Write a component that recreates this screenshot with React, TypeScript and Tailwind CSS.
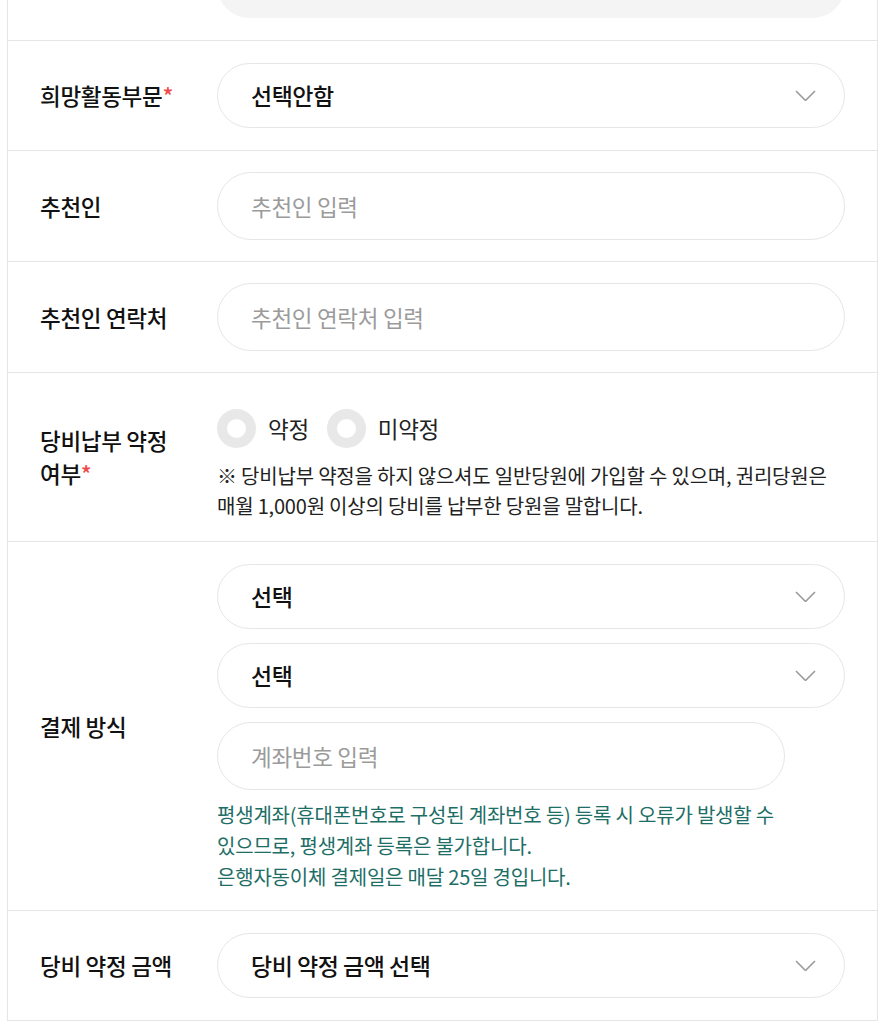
import React from 'react';

const font = { fontFamily: '"Noto Sans CJK KR", "Noto Sans", sans-serif' };

const Chevron: React.FC = () => (
  <svg width="21" height="11" viewBox="0 0 21 11" fill="none" className="shrink-0">
    <path d="M1 1l9.5 9.5L20 1" stroke="#9a9a9a" strokeWidth="1.6" />
  </svg>
);

const Select: React.FC<{ value: string }> = ({ value }) => (
  <div className="flex items-center justify-between h-[65px] rounded-full border border-[#e6e6e6] bg-white pl-[33px] pr-[28px]">
    <span className="text-[23px] font-medium text-[#111] leading-none tracking-[-0.5px]">{value}</span>
    <Chevron />
  </div>
);

const Input: React.FC<{ placeholder: string; className?: string }> = ({ placeholder, className = '' }) => (
  <div className={`flex items-center h-[68px] rounded-full border border-[#e6e6e6] bg-white pl-[33px] ${className}`}>
    <span className="text-[22.5px] text-[#9b9b9b] leading-none tracking-[-0.3px]">{placeholder}</span>
  </div>
);

const Row: React.FC<{ label: React.ReactNode; children: React.ReactNode; className?: string }> = ({ label, children, className = 'py-[22px]' }) => (
  <div className="flex border-b border-[#e6e6e6]">
    <div className="w-[209px] shrink-0 flex items-center pl-[32px]">
      <div className="text-[22.5px] font-medium text-[#111] leading-[33px] tracking-[-0.3px]">{label}</div>
    </div>
    <div className={`flex-1 pr-[32px] ${className}`}>{children}</div>
  </div>
);

const Req = () => <span className="text-[#f04b4b]">*</span>;

const Radio: React.FC<{ label: string }> = ({ label }) => (
  <label className="flex items-center gap-[12px]">
    <span className="w-[39px] h-[39px] rounded-full border-[10px] border-[#e8e8e8] bg-white" />
    <span className="text-[22.5px] text-[#222] leading-none tracking-[-0.3px]">{label}</span>
  </label>
);

export default function App() {
  return (
    <div className="min-h-screen bg-white" style={font}>
      <div className="ml-[7px] mr-[3px] border-x border-[#e6e6e6]">
        {/* tail of previous row */}
        <div className="flex border-b border-[#e6e6e6] h-[41px] overflow-hidden">
          <div className="w-[209px] shrink-0" />
          <div className="flex-1 pr-[32px] flex flex-col justify-end pb-[22px]">
            <div className="h-[65px] shrink-0 rounded-full bg-[#f4f4f4]" />
          </div>
        </div>

        <Row label={<>희망활동부문<Req /></>}>
          <Select value="선택안함" />
        </Row>

        <Row label="추천인" className="py-[21px]">
          <Input placeholder="추천인 입력" />
        </Row>

        <Row label="추천인 연락처" className="py-[21px]">
          <Input placeholder="추천인 연락처 입력" />
        </Row>

        <Row label={<>당비납부 약정<br />여부<Req /></>} className="pt-[36px] pb-[20px]">
          <div className="flex items-center gap-[18px]">
            <Radio label="약정" />
            <Radio label="미약정" />
          </div>
          <p className="mt-[13px] text-[20px] leading-[30px] text-[#222] tracking-[-0.2px] break-keep">
            ※ 당비납부 약정을 하지 않으셔도 일반당원에 가입할 수 있으며, 권리당원은 매월 1,000원 이상의 당비를 납부한 당원을 말합니다.
          </p>
        </Row>

        <Row label="결제 방식" className="pt-[22px] pb-[18px]">
          <div className="flex flex-col gap-[14px]">
            <Select value="선택" />
            <Select value="선택" />
            <Input placeholder="계좌번호 입력" className="mr-[60px]" />
          </div>
          <p className="mt-[9px] text-[20px] leading-[31px] text-[#1d6e66] tracking-[-0.2px] pr-[50px] break-keep">
            평생계좌(휴대폰번호로 구성된 계좌번호 등) 등록 시 오류가 발생할 수 있으므로, 평생계좌 등록은 불가합니다.
            <br />
            은행자동이체 결제일은 매달 25일 경입니다.
          </p>
        </Row>

        <Row label="당비 약정 금액">
          <Select value="당비 약정 금액 선택" />
        </Row>
      </div>
    </div>
  );
}
